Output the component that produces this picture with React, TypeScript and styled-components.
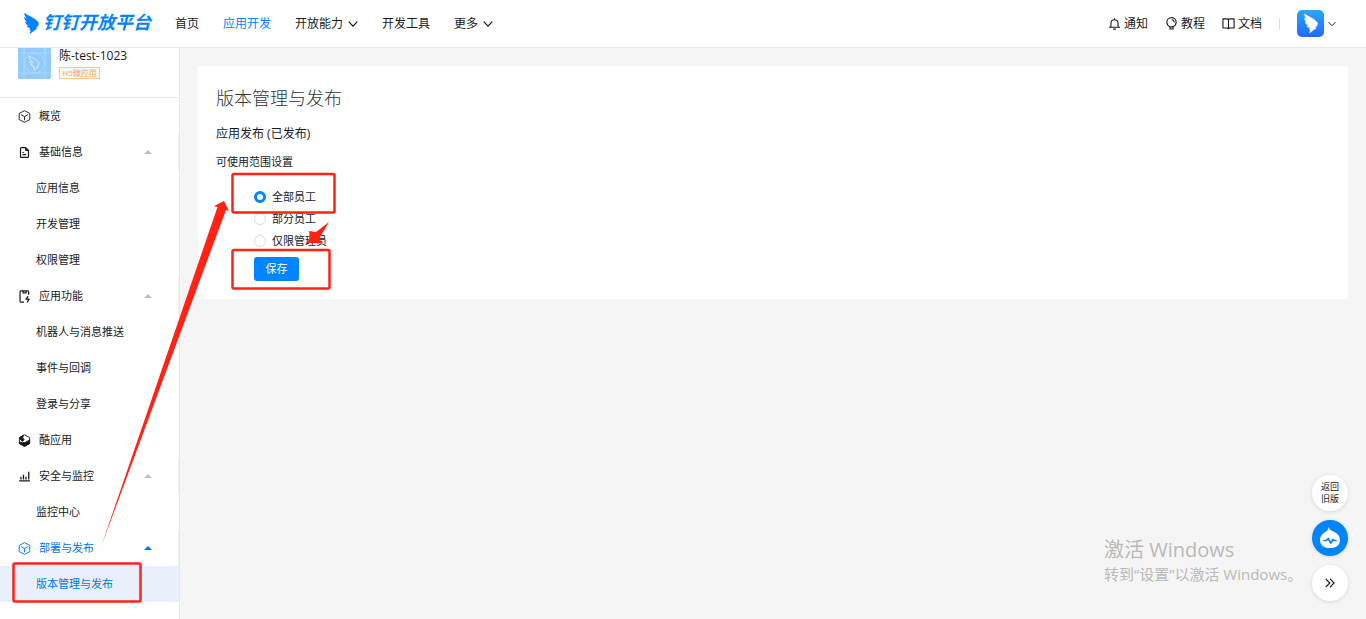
import React from "react";
import styled, { createGlobalStyle } from "styled-components";

const Global = createGlobalStyle`
  *, *::before, *::after { box-sizing: border-box; }
  body {
    margin: 0;
    background: #f5f5f5;
    color: #171a1d;
    font-family: "Open Sans", "Noto Sans CJK SC", sans-serif;
    font-size: 12px;
    line-height: 18px;
  }
  h1, h2, p, ul, fieldset { margin: 0; padding: 0; border: 0; font-weight: 400; }
  ul { list-style: none; }
  a { color: inherit; text-decoration: none; }
  button { font: inherit; border: 0; padding: 0; cursor: pointer; }
`;

const Page = styled.div`
  position: relative;
  display: flex;
  flex-direction: column;
  min-height: 100vh;
  overflow: hidden;
`;

const Header = styled.header`
  display: flex;
  align-items: center;
  height: 48px;
  padding: 0 30px 0 24px;
  background: #fff;
  border-bottom: 1px solid #e8e8e8;
`;

const Logo = styled.a`
  display: flex;
  align-items: center;
  gap: 4px;
  width: 130px;
  color: #0084ff;
  font-size: 18px;
  line-height: 24px;
  font-weight: 700;
  font-style: italic;
  white-space: nowrap;
`;

const LogoText = styled.span`
  padding-bottom: 3px;
`;

const Nav = styled.nav`
  display: flex;
  flex: 1;
  gap: 24px;
  margin-left: 21px;
`;

const NavLink = styled.a<{ $active?: boolean }>`
  display: flex;
  align-items: center;
  gap: 5px;
  color: ${(p) => (p.$active ? "#0084ff" : "#171a1d")};
`;

const Tools = styled.div`
  display: flex;
  align-items: center;
  gap: 17px;
`;

const ToolLink = styled.a`
  display: flex;
  align-items: center;
  gap: 3px;
`;

const Divider = styled.span`
  width: 1px;
  height: 12px;
  background: #dcdcdc;
`;

const Account = styled.button`
  display: flex;
  align-items: center;
  gap: 4px;
  background: none;
`;

const Body = styled.div`
  display: flex;
  flex: 1;
`;

const Sidebar = styled.aside`
  flex: 0 0 180px;
  background: #fff;
  border-right: 1px solid #e8e8e8;
`;

const AppHead = styled.div`
  display: flex;
  gap: 8px;
  height: 50px;
  padding-left: 18px;
  border-bottom: 1px solid #ececec;
`;

const AppTag = styled.span`
  display: block;
  width: 41px;
  height: 12px;
  border: 1px solid #ffc48c;
  color: #ff9b57;
  background: #fff8f0;
  font-size: 8px;
  line-height: 10px;
  text-align: center;
`;

const AppName = styled.p`
  line-height: 16px;
  margin-bottom: 3px;
`;

const MenuRow = styled.a<{ $active?: boolean; $group?: boolean }>`
  display: flex;
  align-items: center;
  height: 36px;
  padding: 0 26px 0 18px;
  font-size: 11px;
  gap: 8px;
  color: ${(p) => (p.$active ? "#0073ff" : "#171a1d")};
  border-right: ${(p) => (p.$group ? "1px solid #f0f0f0" : "0")};
`;

const MenuText = styled.span`
  flex: 1;
`;

const SubRow = styled.a<{ $selected?: boolean }>`
  display: flex;
  align-items: center;
  height: 36px;
  padding-left: 36px;
  font-size: 11px;
  color: ${(p) => (p.$selected ? "#0073ff" : "#171a1d")};
  background: ${(p) => (p.$selected ? "#e9f0fb" : "transparent")};
`;

const Main = styled.main`
  flex: 1;
  padding: 18px;
`;

const Card = styled.section`
  padding: 18px;
  background: #fff;
  border-radius: 2px;
`;

const Title = styled.h1`
  font-family: "Noto Sans CJK SC", sans-serif;
  font-size: 18px;
  line-height: 26px;
  font-weight: 300;
  color: #333;
`;

const Status = styled.h2`
  margin-top: 14px;
  font-size: 12px;
  line-height: 20px;
`;

const Scope = styled.fieldset`
  min-width: 0;
  font-size: 11px;
`;

const Legend = styled.legend`
  padding: 9px 0 15px;
`;

const Option = styled.label`
  display: flex;
  align-items: center;
  gap: 6px;
  height: 22px;
  padding-left: 38px;
`;

const Radio = styled.input`
  appearance: none;
  width: 12px;
  height: 12px;
  margin: 0;
  border: 1px solid #dcdcdc;
  border-radius: 50%;
  background: #fff;
  &:checked { border: 3px solid #0084ff; }
`;

const Save = styled.button`
  display: block;
  width: 45px;
  height: 24px;
  margin: 5px 0 0 38px;
  border-radius: 3px;
  background: #0084ff;
  color: #fff;
  font-size: 11px;
`;

const Watermark = styled.div`
  position: absolute;
  right: 60px;
  bottom: 34px;
  width: 202px;
  color: #b9b9b9;
  font-size: 15px;
  line-height: 22px;
  white-space: nowrap;
`;

const WatermarkTitle = styled.p`
  font-size: 20px;
  line-height: 26px;
`;

const Floating = styled.div`
  position: absolute;
  right: 18px;
  bottom: 18px;
  display: flex;
  flex-direction: column;
  gap: 9px;
`;

const Round = styled.button<{ $blue?: boolean }>`
  display: flex;
  align-items: center;
  justify-content: center;
  width: 36px;
  height: 36px;
  border-radius: 50%;
  background: ${(p) => (p.$blue ? "#0084ff" : "#fff")};
  color: #171a1d;
  font-size: 9px;
  line-height: 12px;
  box-shadow: 0 1px 4px rgba(0, 0, 0, 0.12);
`;

const Marks = styled.svg`
  position: absolute;
  left: 0;
  top: 0;
  pointer-events: none;
`;

const Wing = ({ size, color }: { size: [number, number]; color: string }) => (
  <svg width={size[0]} height={size[1]} viewBox="0 0 16 23" fill={color} aria-hidden="true">
    <path d="M.5 0C2.800 2.200 7 3.600 10.300 5.800c3.500 2.300 5.600 4.500 5.500 6.200-.2 1.400-1.500 3-3 4.600h1.700L5.800 23l1.400-4.400H5.600l.9-2.200C4.600 16.200 3.300 15.300 2.700 14l2.400.1C3 13 1.500 11.500 1 9.500l2.300.8C1.300 8.600.2 6.600.1 4.500c1 .9 2 1.500 3 1.900C1.200 4.300.1 2 .5 0z" />
  </svg>
);

const Chevron = ({ w = 10 }: { w?: number }) => (
  <svg width={w} height="6" viewBox="0 0 10 6" fill="none" stroke="#171a1d" strokeWidth="1.2" aria-hidden="true">
    <path d="M.7.7 5 5.200 9.300.7" />
  </svg>
);

type IconName = "cube" | "doc" | "feature" | "cool" | "chart" | "bell" | "bulb" | "book";

const Icon = ({ name }: { name: IconName }) => (
  <svg width="13" height="13" viewBox="0 0 14 14" fill="none" stroke="currentColor" strokeWidth="1" strokeLinejoin="round" aria-hidden="true">
    {name === "cube" && <path d="M7 .7 12.700 3.700v6.600L7 13.300 1.300 10.300V3.700zM3.300 5 7 7.100 10.700 5M7 7.100v4" />}
    {name === "doc" && (
      <path strokeWidth="1.300" d="M8.300 1.700H3.700q-1 0-1 1v8.600q0 1 1 1h6.600q1 0 1-1V4.700zM8.300 1.700v3h3M4.800 9.300h4M4.800 7h1.500" />
    )}
    {name === "feature" && (
      <g strokeWidth="1.300">
        <path d="M11.500 5V2q0-1-1-1H3.200q-1 0-1 1v10q0 1 1 1h3.300M5.500 1.500V3h3.200V1.500" />
        <path d="M11 6.500 8.600 9.900h3.500L9.800 13.300" />
      </g>
    )}
    {name === "cool" && (
      <g>
        <path d="M7 .8 12.500 3.800v6.400L7 13.200 1.500 10.200V3.800z" />
        <path d="M1.500 8.500 5 9.500 8 9l4.500-2.500v3.900L7 13.300 1.500 10.300zM1.800 4 6 1.400 5 4l1.500 2L5 8 3 6.500z" fill="currentColor" />
      </g>
    )}
    {name === "chart" && <path strokeWidth="1.400" d="M1.200 11.800h11.600M3.200 7.200v3M5.900 5.200v5M8.600 7.400v2.800M11.600 1.800v8.400" />}
    {name === "bell" && <path strokeWidth="1.200" d="M1 11h12M2.700 11c.6-1 .5-2.300.5-4.200a3.800 3.800 0 0 1 7.600 0c0 1.900-.1 3.200.5 4.200M5.500 13h3M7 1.300v1.500" />}
    {name === "bulb" && (
      <path strokeWidth="1.200" d="M5.300 10.600C3.200 9.500 2 7.700 2 5.700a5 5 0 0 1 10 0c0 2-1.200 3.800-3.300 4.900zM5.300 10.600v2.300h3.400v-2.300M7.200 2.900a2.800 2.800 0 0 1 2.600 2.900" />
    )}
    {name === "book" && <path strokeWidth="1.200" d="M7 3Q6.500 2 5.500 2H1v9.800h4.800L7 12.600l1.200-.8H13V2H8.500Q7.500 2 7 3zM7 3v9" />}
  </svg>
);

const Caret = ({ active }: { active?: boolean }) => (
  <svg width="8" height="4" viewBox="0 0 8 4" fill={active ? "#0073ff" : "#bfbfbf"} aria-hidden="true">
    <path d="M4 0 8 4H0z" />
  </svg>
);

const menu: { label: string; icon: IconName; items?: string[]; active?: boolean }[] = [
  { label: "概览", icon: "cube" },
  { label: "基础信息", icon: "doc", items: ["应用信息", "开发管理", "权限管理"] },
  { label: "应用功能", icon: "feature", items: ["机器人与消息推送", "事件与回调", "登录与分享"] },
  { label: "酷应用", icon: "cool" },
  { label: "安全与监控", icon: "chart", items: ["监控中心"] },
  { label: "部署与发布", icon: "cube", items: ["版本管理与发布"], active: true },
];

export default function App() {
  return (
    <Page>
      <Global />
      <Header>
        <Logo href="#">
          <Wing size={[15, 23]} color="#0084ff" />
          <LogoText>钉钉开放平台</LogoText>
        </Logo>
        <Nav>
          <NavLink href="#">首页</NavLink>
          <NavLink href="#" $active>应用开发</NavLink>
          <NavLink href="#">开放能力<Chevron /></NavLink>
          <NavLink href="#">开发工具</NavLink>
          <NavLink href="#">更多<Chevron /></NavLink>
        </Nav>
        <Tools>
          <ToolLink href="#"><Icon name="bell" />通知</ToolLink>
          <ToolLink href="#"><Icon name="bulb" />教程</ToolLink>
          <ToolLink href="#"><Icon name="book" />文档</ToolLink>
          <Divider />
          <Account aria-label="账号">
            <svg width="27" height="27" viewBox="0 0 27 27" aria-hidden="true">
              <defs>
                <linearGradient id="account" x1="0" y1="0" x2="0" y2="1">
                  <stop offset="0" stopColor="#2ba6ff" />
                  <stop offset="1" stopColor="#1f6bff" />
                </linearGradient>
              </defs>
              <rect width="27" height="27" rx="5" fill="url(#account)" />
              <g transform="translate(7 3)"><Wing size={[14, 21]} color="#fff" /></g>
            </svg>
            <Chevron w={8} />
          </Account>
        </Tools>
      </Header>
      <Body>
        <Sidebar>
          <AppHead>
            <svg width="33" height="31" viewBox="0 0 33 31" fill="none" stroke="#b9deff" strokeWidth=".7" aria-hidden="true">
              <path d="M0 0h33v30q0 1-1 1H1q-1 0-1-1z" fill="#91caff" stroke="none" />
              <path d="M0 5h33M0 25h33M6 0v31M27 0v31" />
              <circle cx="16.500" cy="15" r="10" />
              <path stroke="#d9eeff" strokeWidth=".9" d="M11 8c3 2 6 2.500 9 5.500 1.500 1.600 1 3-.8 5h1.500l-5 4 .8-3h-1.400l.5-1.500c-1.500 0-2.500-.6-3-1.700l2-.2c-1.700-.4-2.500-1.300-2.800-2.600l3 .4C12.500 12 11 10.500 11 8z" />
            </svg>
            <div>
              <AppName>陈-test-1023</AppName>
              <AppTag>H5微应用</AppTag>
            </div>
          </AppHead>
          <nav>
            <ul>
              {menu.map((group) => (
                <li key={group.label}>
                  <MenuRow href="#" $active={group.active} $group={!!group.items}>
                    <Icon name={group.icon} />
                    <MenuText>{group.label}</MenuText>
                    {group.items && <Caret active={group.active} />}
                  </MenuRow>
                  {group.items && (
                    <ul>
                      {group.items.map((item) => (
                        <li key={item}>
                          <SubRow href="#" $selected={group.active}>{item}</SubRow>
                        </li>
                      ))}
                    </ul>
                  )}
                </li>
              ))}
            </ul>
          </nav>
        </Sidebar>
        <Main>
          <Card>
            <Title>版本管理与发布</Title>
            <Status>应用发布 (已发布)</Status>
            <Scope>
              <Legend>可使用范围设置</Legend>
              <Option><Radio type="radio" name="scope" defaultChecked />全部员工</Option>
              <Option><Radio type="radio" name="scope" />部分员工</Option>
              <Option><Radio type="radio" name="scope" />仅限管理员</Option>
            </Scope>
            <Save>保存</Save>
          </Card>
        </Main>
      </Body>
      <Watermark>
        <WatermarkTitle>激活 Windows</WatermarkTitle>
        <p>转到“设置”以激活 Windows。</p>
      </Watermark>
      <Floating>
        <Round>返回<br />旧版</Round>
        <Round $blue aria-label="智能助手">
          <svg width="22" height="24" viewBox="0 0 22 24" aria-hidden="true">
            <path fill="#fff" d="M9.500 1c.6 2 1.800 3.200 4.500 4.300 4 1.700 7 4.500 7 9 0 4.200-3.500 7.700-8 7.700H9c-4.500 0-8-3.500-8-7.700 0-4 2.500-6.800 6-8.800C8.500 4.500 9.300 3 9.500 1z" />
            <path fill="none" stroke="#0084ff" strokeWidth="1.700" strokeLinejoin="round" strokeLinecap="round" d="M5 14.500h2.500l1.700-2 2.600 4.500 2.200-3.500 1 1H17" />
          </svg>
        </Round>
        <Round aria-label="收起">
          <svg width="10" height="10" viewBox="0 0 10 10" fill="none" stroke="#171a1d" strokeWidth="1.200" aria-hidden="true">
            <path d="M.7.8 4.800 5 .7 9.200M5 .8 9.100 5 5 9.200" />
          </svg>
        </Round>
      </Floating>
      <Marks width="345" height="619" viewBox="0 0 345 619" aria-hidden="true">
        <g fill="none" stroke="#ff2215" strokeWidth="2.500">
          <rect x="13.500" y="563.500" width="127" height="38" rx="1.500" />
          <rect x="232.500" y="174" width="102" height="38.500" rx="1.500" />
          <rect x="232.500" y="250" width="97" height="38.500" rx="1.500" />
        </g>
        <path fill="#ff2215" d="M101 547 217.500 207 214 206 224 201 229 211 226 210z" />
        <path fill="#ff2215" d="M329 222 316 232 309 231 310 238 306 243 323 243 319 239z" />
      </Marks>
    </Page>
  );
}
